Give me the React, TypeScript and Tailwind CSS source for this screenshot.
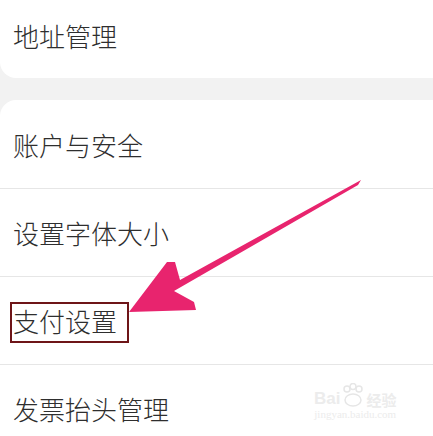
const rows = ["账户与安全", "设置字体大小", "支付设置", "发票抬头管理"];

function Row({ label, last }: { label: string; last?: boolean }) {
  return (
    <div className={`flex h-[88px] items-center px-[13px] ${last ? "" : "border-b border-[#e6e6e6]"}`}>
      <span className="text-[26px] font-light leading-none text-[#2e2e2e]">{label}</span>
    </div>
  );
}

function Watermark() {
  return (
    <div className="absolute left-[314px] top-[383px] flex flex-col items-center text-[#ececec] select-none">
      <div className="flex items-end gap-[2px]">
        <span className="font-['Liberation_Sans'] text-[17px] font-bold leading-none">Bai</span>
        <svg width="22" height="24" viewBox="0 0 22 24">
          <circle cx="5" cy="6" r="3" fill="none" stroke="#e6e6e6" strokeWidth="1.5" />
          <circle cx="11" cy="3.5" r="3" fill="none" stroke="#e6e6e6" strokeWidth="1.5" />
          <circle cx="17" cy="6" r="3" fill="none" stroke="#e6e6e6" strokeWidth="1.5" />
          <ellipse cx="11" cy="17" rx="8" ry="6" fill="none" stroke="#e6e6e6" strokeWidth="1.5" />
        </svg>
        <span className="text-[15px] font-bold leading-none">经验</span>
      </div>
      <span className="mt-[2px] font-['Liberation_Serif'] text-[11px] leading-none">jingyan.baidu.com</span>
    </div>
  );
}

export default function App() {
  return (
    <div className="relative h-[436px] w-[433px] overflow-hidden bg-[#f2f2f2] font-['Noto_Sans_CJK_SC','Noto_Sans',sans-serif]">
      <div className="h-[78px] rounded-bl-2xl bg-white">
        <div className="flex h-[71px] items-center px-[13px]">
          <span className="text-[26px] font-light leading-none text-[#2e2e2e]">地址管理</span>
        </div>
      </div>

      <div className="mt-[22px] rounded-tl-2xl bg-white pt-px">
        {rows.map((r, i) => (
          <Row key={r} label={r} last={i === rows.length - 1} />
        ))}
        <div className="h-[20px]" />
      </div>

      {/* red highlight box */}
      <div className="absolute left-[10px] top-[302px] h-[41px] w-[119px] border-[2.5px] border-[#6e1518]" />

      {/* arrow */}
      <svg className="absolute left-0 top-0" width="433" height="436" viewBox="0 0 433 436">
        <polygon
          points="361,180 180,280 175,262 167,262 129,312 196,310 194,302 174,291 358,185"
          fill="#e8246e"
        />
      </svg>

      <Watermark />
    </div>
  );
}
